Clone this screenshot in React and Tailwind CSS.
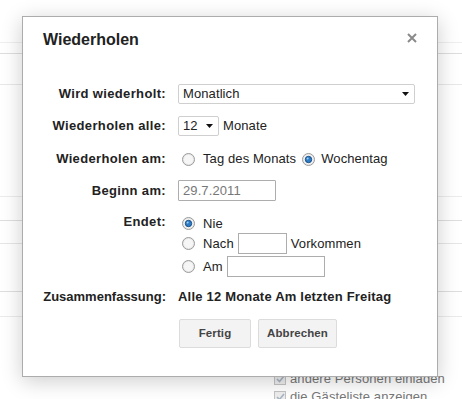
import React from "react";

const font = { fontFamily: '"Liberation Sans", Arial, sans-serif' };

function Radio({ checked }) {
  return (
    <svg width="13" height="13" viewBox="0 0 13 13" className="shrink-0">
      <circle cx="6.5" cy="6.5" r="6" fill="#e9e9e9" stroke="#9b9b9b" />
      <circle cx="6.5" cy="6.5" r="4.5" fill="#f6f6f6" />
      {checked && <circle cx="6.5" cy="6.5" r="3.2" fill="#2e7cc6" stroke="#1a4f86" strokeWidth="1" />}
      {checked && <circle cx="5.6" cy="5.6" r="1" fill="#9fd0f5" />}
    </svg>
  );
}

function Arrow() {
  return (
    <svg width="7" height="4" viewBox="0 0 7 4">
      <polygon points="0,0 7,0 3.5,4" fill="#111" />
    </svg>
  );
}

function Check() {
  return (
    <span className="w-[12px] h-[12px] border border-[#c4c4c4] bg-[#eeeeee] flex items-center justify-center">
      <svg width="9" height="8" viewBox="0 0 9 8">
        <path d="M1 4 L3.5 6.5 L8 1" stroke="#a8b4c4" strokeWidth="1.6" fill="none" />
      </svg>
    </span>
  );
}

function Label({ children, wide }) {
  return (
    <div
      className={
        wide
          ? "w-[143px] text-right font-bold text-[#222] leading-[16px] tracking-[0px] whitespace-nowrap"
          : "w-[143px] text-right font-bold text-[#222] leading-[16px] tracking-[0.35px] whitespace-nowrap"
      }
    >
      {children}
    </div>
  );
}

export default function App() {
  return (
    <div className="relative w-[462px] h-[399px] bg-white overflow-hidden text-[13px] tracking-[0.1px]" style={font}>
      {/* page behind the dialog */}
      <div className="flex flex-col">
        <div className="h-[43px] border-b border-[#efefef]" />
        <div className="h-[11px] border-b border-[#dedede]" />
        <div className="h-[31px] border-b border-[#e8e8e8]" />
        <div className="h-[112px] border-b border-[#ececec]" />
        <div className="h-[24px] border-b border-[#dedede]" />
        <div className="h-[23px] border-b border-[#e6e6e6]" />
        <div className="h-[48px] border-b border-[#dedede]" />
        <div className="h-[25px] border-b border-[#ebebeb]" />
        <div className="h-[53px]" />
        <div className="pl-[274px] flex flex-col text-[#777]">
          <div className="h-[18px] flex items-center gap-[4px]"><Check />andere Personen einladen</div>
          <div className="h-[18px] flex items-center gap-[4px]"><Check />die Gästeliste anzeigen</div>
        </div>
      </div>

      {/* dialog */}
      <div className="absolute left-[22px] top-[16px] w-[416px] h-[361px] border border-[#acacac] bg-white shadow-[0_4px_20px_rgba(0,0,0,0.2)]">
        <div className="flex justify-between pt-[14px] pl-[20px] pr-[20px]">
          <div className="text-[16px] leading-[18px] font-bold text-[#222] tracking-normal">Wiederholen</div>
          <svg width="10" height="10" viewBox="0 0 10 10" className="mt-[2px]">
            <path d="M1 1 L9 9 M9 1 L1 9" stroke="#8a8a8a" strokeWidth="2" />
          </svg>
        </div>

        <div className="mt-[35px] flex flex-col text-[#222]">
          <div className="h-[20px] flex items-center">
            <Label>Wird wiederholt:</Label>
            <div className="ml-[12px] w-[237px] h-[20px] border border-[#cfcfcf] rounded-[2px] flex items-center justify-between pl-[4px] pr-[5px]">
              <span>Monatlich</span>
              <Arrow />
            </div>
          </div>

          <div className="mt-[12px] h-[20px] flex items-center">
            <Label>Wiederholen alle:</Label>
            <div className="ml-[12px] w-[41px] h-[20px] border border-[#cfcfcf] rounded-[2px] flex items-center justify-between pl-[4px] pr-[5px]">
              <span>12</span>
              <Arrow />
            </div>
            <span className="ml-[4px]">Monate</span>
          </div>

          <div className="mt-[13px] h-[20px] flex items-center">
            <Label>Wiederholen am:</Label>
            <div className="ml-[16px] flex items-center">
              <Radio />
              <span className="ml-[8px]">Tag des Monats</span>
              <span className="ml-[6px]"><Radio checked /></span>
              <span className="ml-[6px]">Wochentag</span>
            </div>
          </div>

          <div className="mt-[11px] h-[21px] flex items-center">
            <Label>Beginn am:</Label>
            <div className="ml-[12px] w-[98px] h-[21px] border border-[#adadad] rounded-[1px] flex items-center pl-[4px] text-[#777]">
              29.7.2011
            </div>
          </div>

          <div className="mt-[13px] flex">
            <Label>Endet:</Label>
            <div className="ml-[16px] flex flex-col">
              <div className="h-[19px] flex items-center">
                <Radio checked />
                <span className="ml-[8px]">Nie</span>
              </div>
              <div className="h-[21px] flex items-center">
                <Radio />
                <span className="ml-[8px]">Nach</span>
                <div className="ml-[4px] w-[49px] h-[21px] border border-[#adadad]" />
                <span className="ml-[4px]">Vorkommen</span>
              </div>
              <div className="mt-[2px] h-[21px] flex items-center">
                <Radio />
                <span className="ml-[8px]">Am</span>
                <div className="ml-[4px] w-[98px] h-[21px] border border-[#adadad]" />
              </div>
            </div>
          </div>

          <div className="mt-[12px] flex">
            <Label wide>Zusammenfassung:</Label>
            <div className="ml-[12px] font-bold leading-[16px] tracking-[0.2px]">Alle 12 Monate Am letzten Freitag</div>
          </div>

          <div className="mt-[14px] pl-[156px] flex gap-[7px]">
            <button className="w-[72px] h-[29px] border border-[#dcdcdc] rounded-[2px] bg-[#f3f3f3] text-[11.5px] font-bold text-[#444]">
              Fertig
            </button>
            <button className="w-[79px] h-[29px] border border-[#dcdcdc] rounded-[2px] bg-[#f3f3f3] text-[11.5px] font-bold text-[#444]">
              Abbrechen
            </button>
          </div>
        </div>
      </div>
    </div>
  );
}
